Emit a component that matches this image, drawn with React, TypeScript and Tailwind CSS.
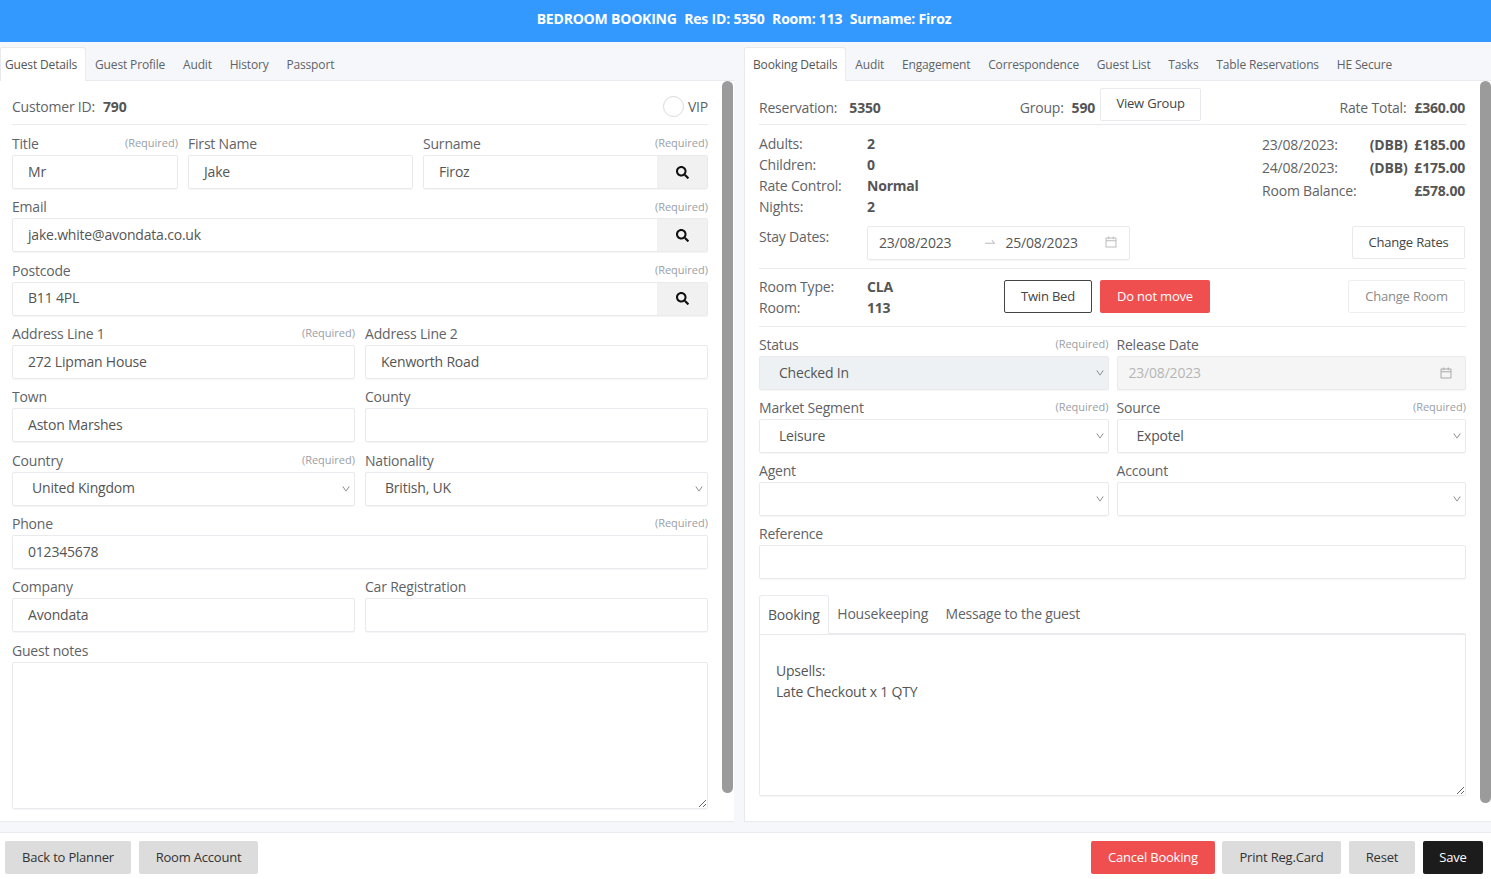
import type { ReactNode } from "react";
import { AiOutlineCalendar, AiOutlineDown, AiOutlineSwapRight } from "react-icons/ai";
import { FaSearch } from "react-icons/fa";

function Tabs({ items, first = "pl-[9px]" }: { items: string[]; first?: string }) {
  return (
    <div className="flex h-[34px] items-stretch border-b border-[#e8eaed] text-[12px] tracking-[-0.15px] text-[#5f6368]">
      {items.map((t, i) =>
        i === 0 ? (
          <div
            key={t}
            className={`-mb-px flex items-center rounded-t-[3px] border-t border-r border-l border-[#e8eaed] bg-white pr-[8px] text-[#555] ${first}`}
          >
            {t}
          </div>
        ) : (
          <div key={t} className="flex items-center px-[8.9px] pt-[2px]">
            {t}
          </div>
        ),
      )}
    </div>
  );
}

function Label({ text, required }: { text: string; required?: boolean }) {
  return (
    <div className="flex h-[23px] items-center justify-between">
      <span className="text-[14px] text-[#5f6368]">{text}</span>
      {required && <span className="text-[11px] tracking-normal text-[#9aa0a6]">(Required)</span>}
    </div>
  );
}

function Box({ children, className = "" }: { children?: ReactNode; className?: string }) {
  return (
    <div
      className={`flex h-[34px] items-center rounded-[2px] border border-[#e8eaed] pb-[2px] text-[14px] text-[#555] shadow-[0_1px_1px_rgba(0,0,0,0.04)] ${className}`}
    >
      {children}
    </div>
  );
}

function Input({ label, value, required, search }: { label: string; value?: string; required?: boolean; search?: boolean }) {
  return (
    <div className="min-w-0">
      <Label text={label} required={required} />
      <Box className="overflow-hidden !pb-0 pl-[15px]">
        <span className="flex-1 pb-[2px]">{value}</span>
        {search && (
          <span className="flex h-full w-[50px] items-center justify-center bg-[#f1f1f1] text-[#111]">
            <FaSearch size={13} />
          </span>
        )}
      </Box>
    </div>
  );
}

function Select({ label, value, required, disabled }: { label: string; value?: string; required?: boolean; disabled?: boolean }) {
  return (
    <div className="min-w-0">
      <Label text={label} required={required} />
      <Box className={`justify-between pr-[2px] pl-[19px] ${disabled ? "bg-[#eef1f3]" : ""}`}>
        <span>{value}</span>
        <AiOutlineDown size={10} className="mt-[2px] mr-[1px] text-[#777]" />
      </Box>
    </div>
  );
}

function Button({ children, className = "" }: { children: ReactNode; className?: string }) {
  return (
    <button className={`flex h-[33px] items-center justify-center rounded-[2px] text-[13px] ${className}`}>
      {children}
    </button>
  );
}

function Scrollbar({ height }: { height: string }) {
  return <div className={`w-[11px] shrink-0 rounded-full bg-[#9b9b9b] ${height}`} />;
}

function Row({ children, className = "", gap = "mb-[6.35px]" }: { children: ReactNode; className?: string; gap?: string }) {
  return <div className={`grid ${gap} ${className}`}>{children}</div>;
}

export default function App() {
  return (
    <div className="flex h-screen flex-col overflow-hidden bg-white font-['Open_Sans',sans-serif] tracking-[-0.2px] text-[#555]">
      {/* Title bar */}
      <div className="flex h-[42px] shrink-0 items-center justify-center gap-[7.5px] bg-[#3399ff] pr-[3px] pb-[5px] text-[14px] font-bold text-white">
        <span>BEDROOM BOOKING</span>
        <span>Res ID: 5350</span>
        <span>Room: 113</span>
        <span>Surname: Firoz</span>
      </div>

      <div className="flex h-[791px] shrink-0 gap-[10px] border-b border-[#e8eaed] bg-[#f5f7fa] pt-[5px]">
        {/* Guest column */}
        <div className="flex w-[734px] shrink-0 flex-col pb-[10px]">
          <Tabs items={["Guest Details", "Guest Profile", "Audit", "History", "Passport"]} first="pl-[4px]" />
          <div className="flex min-h-0 flex-1 border-b border-[#e8eaed] bg-white">
            <div className="w-[722px] shrink-0 pr-[14px] pl-[12px]">
              <div className="mb-[7px] flex h-[44px] items-center justify-between border-b border-[#e8eaed] pt-[8px] text-[14px] text-[#5f6368]">
                <div>
                  Customer ID:<b className="ml-[8px] font-bold text-[#555]">790</b>
                </div>
                <div className="flex items-center gap-[4px]">
                  <span className="h-[21px] w-[21px] rounded-full border border-[#d9d9d9]" />
                  VIP
                </div>
              </div>
              <Row className="grid-cols-[166px_225px_1fr] gap-x-[10px]">
                <Input label="Title" value="Mr" required />
                <Input label="First Name" value="Jake" />
                <Input label="Surname" value="Firoz" required search />
              </Row>
              <Row>
                <Input label="Email" value="jake.white@avondata.co.uk" required search />
              </Row>
              <Row>
                <Input label="Postcode" value="B11 4PL" required search />
              </Row>
              <Row className="grid-cols-2 gap-x-[10px]">
                <Input label="Address Line 1" value="272 Lipman House" required />
                <Input label="Address Line 2" value="Kenworth Road" />
              </Row>
              <Row className="grid-cols-2 gap-x-[10px]">
                <Input label="Town" value="Aston Marshes" />
                <Input label="County" />
              </Row>
              <Row className="grid-cols-2 gap-x-[10px]">
                <Select label="Country" value="United Kingdom" required />
                <Select label="Nationality" value="British, UK" />
              </Row>
              <Row>
                <Input label="Phone" value="012345678" required />
              </Row>
              <Row className="grid-cols-2 gap-x-[10px]">
                <Input label="Company" value="Avondata" />
                <Input label="Car Registration" />
              </Row>
              <Label text="Guest notes" />
              <textarea
                readOnly
                className="block h-[147px] w-full rounded-[2px] border border-[#e8eaed] shadow-[0_1px_1px_rgba(0,0,0,0.04)] outline-none"
              />
            </div>
            <Scrollbar height="h-[712px]" />
          </div>
        </div>

        {/* Booking column */}
        <div className="flex min-w-0 flex-1 flex-col pb-[10px]">
          <Tabs items={["Booking Details", "Audit", "Engagement", "Correspondence", "Guest List", "Tasks", "Table Reservations", "HE Secure"]} first="pl-[8px]" />
          <div className="flex min-h-0 flex-1 border-b border-l border-[#e8eaed] bg-white">
            <div className="w-[735px] shrink-0 pr-[14px] pl-[14px]">
              {/* Reservation summary */}
              <div className="grid h-[44px] grid-cols-3 items-start border-b border-[#e8eaed] pt-[7px] text-[14px] text-[#5f6368]">
                <div className="pt-[9px]">
                  Reservation:<b className="ml-[12px] font-bold text-[#555]">5350</b>
                </div>
                <div className="ml-[25px] flex w-[260px] items-start">
                  <span className="pt-[9px]">Group:</span>
                  <b className="ml-[8px] pt-[9px] font-bold text-[#555]">590</b>
                  <Button className="ml-[5px] w-[101px] border border-[#e8eaed] pb-[2px] text-[#444]">View Group</Button>
                </div>
                <div className="pt-[9px] pr-[1px] text-right">
                  Rate Total:<b className="ml-[8px] font-bold text-[#555]">£360.00</b>
                </div>
              </div>

              {/* Stay details */}
              <div className="flex justify-between pt-[8px] pr-[1px] text-[14px] text-[#5f6368]">
                <div className="grid grid-cols-[108px_1fr] auto-rows-[21px] items-center">
                  <span>Adults:</span>
                  <b className="font-bold text-[#555]">2</b>
                  <span>Children:</span>
                  <b className="font-bold text-[#555]">0</b>
                  <span>Rate Control:</span>
                  <b className="font-bold text-[#555]">Normal</b>
                  <span>Nights:</span>
                  <b className="font-bold text-[#555]">2</b>
                </div>
                <div className="grid w-[203px] grid-cols-[1fr_auto] auto-rows-[23px] items-center">
                  <span>23/08/2023:</span>
                  <b className="text-right font-bold text-[#555]">(DBB)&nbsp; £185.00</b>
                  <span>24/08/2023:</span>
                  <b className="text-right font-bold text-[#555]">(DBB)&nbsp; £175.00</b>
                  <span>Room Balance:</span>
                  <b className="text-right font-bold text-[#555]">£578.00</b>
                </div>
              </div>
              <div className="mt-[9px] flex h-[43px] justify-between border-b border-[#e8eaed] text-[14px]">
                <div className="flex">
                  <span className="w-[108px] text-[#5f6368]">Stay Dates:</span>
                  <Box className="w-[263px] pr-[11px] pl-[11px]">
                    <span className="w-[103.5px]">23/08/2023</span>
                    <AiOutlineSwapRight size={14} className="mr-[9px] text-[#bbb]" />
                    <span className="flex-1">25/08/2023</span>
                    <AiOutlineCalendar size={14} className="text-[#bbb]" />
                  </Box>
                </div>
                <Button className="mr-[1px] w-[113px] border border-[#e8eaed] text-[#444]">Change Rates</Button>
              </div>

              {/* Room */}
              <div className="flex h-[58px] items-start border-b border-[#e8eaed] pt-[11px] text-[14px]">
                <div className="-mt-[3.5px] grid w-[245px] grid-cols-[108px_1fr] auto-rows-[20.5px] items-center text-[#5f6368]">
                  <span>Room Type:</span>
                  <b className="font-bold text-[#555]">CLA</b>
                  <span>Room:</span>
                  <b className="font-bold text-[#555]">113</b>
                </div>
                <Button className="w-[88px] border border-[#444] text-[#444]">Twin Bed</Button>
                <Button className="ml-[8px] w-[110px] bg-[#f04f50] text-white">Do not move</Button>
                <Button className="mr-[1px] ml-auto w-[117px] border border-[#eeeeee] text-[#8a8a8a]">Change Room</Button>
              </div>

              {/* Booking fields */}
              <div className="pt-[6px]">
                <Row gap="mb-[6px]" className="grid-cols-2 gap-x-[8px]">
                  <Select label="Status" value="Checked In" required disabled />
                  <div>
                    <Label text="Release Date" />
                    <Box className="justify-between bg-[#f5f5f5] pr-[12px] pl-[11px] text-[#b5b5b5]">
                      <span>23/08/2023</span>
                      <AiOutlineCalendar size={14} className="mt-[2px] text-[#aaa]" />
                    </Box>
                  </div>
                </Row>
                <Row gap="mb-[6px]" className="grid-cols-2 gap-x-[8px]">
                  <Select label="Market Segment" value="Leisure" required />
                  <Select label="Source" value="Expotel" required />
                </Row>
                <Row gap="mb-[6px]" className="grid-cols-2 gap-x-[8px]">
                  <Select label="Agent" />
                  <Select label="Account" />
                </Row>
                <Input label="Reference" />
              </div>

              {/* Notes */}
              <div className="mt-[16px] flex h-[38px] items-stretch pb-0 text-[14px] text-[#5f6368]">
                <div className="-mb-px flex items-center rounded-t-[3px] border-t border-r border-l border-[#e8eaed] bg-white px-[8px] pb-[2px] text-[#555]">
                  Booking
                </div>
                <div className="flex items-center px-[8.7px] pb-[2px]">Housekeeping</div>
                <div className="flex items-center px-[8.7px] pb-[2px]">Message to the guest</div>
              </div>
              <div className="h-[163px] resize overflow-auto rounded-[2px] border border-t-2 border-[#e8eaed] px-[16px] pt-[25px] text-[14px] leading-[21px] text-[#555] shadow-[0_1px_1px_rgba(0,0,0,0.04)]">
                <div>Upsells:</div>
                <div>Late Checkout x 1 QTY</div>
              </div>
            </div>
            <Scrollbar height="h-[722px]" />
          </div>
        </div>
      </div>

      {/* Footer actions */}
      <div className="flex flex-1 items-start justify-between pt-[8px] pr-[8px] pl-[5px]">
        <div className="flex gap-[8px]">
          <Button className="w-[126px] bg-[#dcdcdc] text-[#333]">Back to Planner</Button>
          <Button className="w-[119px] bg-[#dcdcdc] text-[#333]">Room Account</Button>
        </div>
        <div className="flex gap-[8px]">
          <Button className="-mr-px w-[124px] bg-[#f04f50] text-white">Cancel Booking</Button>
          <Button className="w-[119px] bg-[#dcdcdc] text-[#333]">Print Reg.Card</Button>
          <Button className="w-[66px] bg-[#dcdcdc] text-[#333]">Reset</Button>
          <Button className="w-[60px] bg-[#1c1c1c] text-white">Save</Button>
        </div>
      </div>
    </div>
  );
}
